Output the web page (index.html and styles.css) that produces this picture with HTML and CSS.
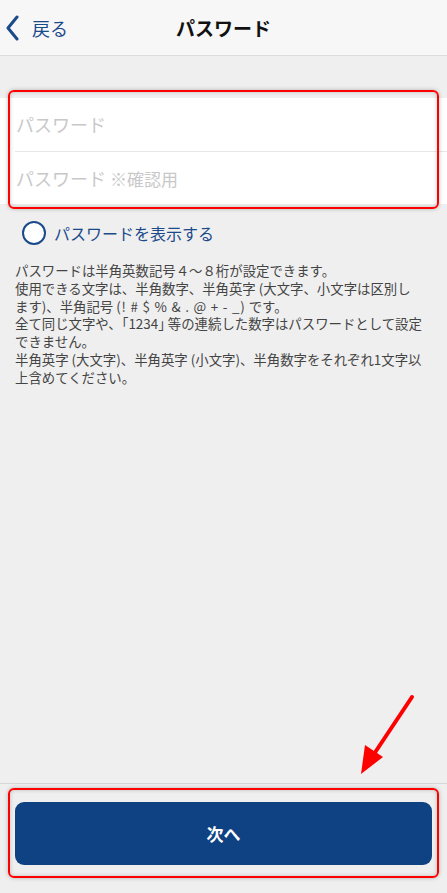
FILE: index.html
```html
<!DOCTYPE html>
<html lang="ja">
  <head>
    <meta charset="UTF-8">
    <title>パスワード</title>
    <meta name="viewport" content="width=device-width, initial-scale=1">
    <link rel="stylesheet" href="styles.css">
  </head>
  <body>
    <div id="header">
      <a class="back">
        <svg width="16" height="26" viewBox="0 0 16 26"><path d="M12 2 L3 13 L12 24" fill="none" stroke="#1b4a8a" stroke-width="3" stroke-linecap="round" stroke-linejoin="round"/></svg>
        <span>戻る</span>
      </a>
      <div class="title">パスワード</div>
    </div>

    <div id="main">
      <div class="card">
        <div class="field">パスワード</div>
        <div class="field">パスワード <span class="small">※確認用</span></div>
      </div>
      <div class="mark card-mark"></div>

      <label class="show">
        <span class="radio"></span>
        <span>パスワードを表示する</span>
      </label>

      <p class="note">
        パスワードは半角英数記号４～８桁が設定できます。<br>
        使用できる文字は、半角数字、半角英字 (大文字、小文字は区別し<br>
        ます)、半角記号 <span class="symbols">(! # $ % &amp; . @ + - _)</span> です。<br>
        全て同じ文字や、｢1234｣ 等の連続した数字はパスワードとして設定<br>
        できません。<br>
        半角英字 (大文字)、半角英字 (小文字)、半角数字をそれぞれ1文字以<br>
        上含めてください。
      </p>
    </div>

    <div id="footer">
      <button class="next">次へ</button>
      <div class="mark button-mark"></div>
    </div>

    <!-- annotation arrow -->
    <svg class="arrow" width="80" height="100" viewBox="0 0 80 100">
      <line x1="62" y1="7" x2="24" y2="64" stroke="#ff0000" stroke-width="4" stroke-linecap="round"/>
      <polygon points="11,84 15,55 33,67" fill="#ff0000"/>
    </svg>
  </body>
</html>
```

FILE: styles.css
```css
html, body {
  margin: 0;
  padding: 0;
  height: 100%;
}

body {
  position: relative;
  display: flex;
  flex-direction: column;
  background: #efefef;
  font-family: "Noto Sans CJK JP", "Noto Sans", sans-serif;
  color: #333;
}

#header {
  position: relative;
  height: 55px;
  background: #f7f7f7;
  border-bottom: 1px solid #dcdcdc;
  display: flex;
  align-items: center;
  justify-content: center;
  flex-shrink: 0;
}

.back {
  position: absolute;
  left: 5px;
  top: 15px;
  display: flex;
  align-items: center;
  gap: 11px;
  color: #1b4a8a;
  font-size: 18px;
}

.title {
  font-size: 19px;
  font-weight: bold;
  color: #111;
}

#main {
  position: relative;
  flex: 1;
  padding-top: 42px;
}

.card {
  background: #fff;
  padding-left: 15px;
}

.field {
  height: 53px;
  line-height: 53px;
  font-size: 18px;
  color: #c8c8c8;
  padding-left: 1px;
}

.field + .field {
  border-top: 1px solid #e6e6e6;
  height: 52px;
  line-height: 52px;
}

.small {
  font-size: 17px;
}

.mark {
  position: absolute;
  border: 2px solid #ff0000;
  border-radius: 6px;
  box-shadow: 0 0 4px rgba(0, 0, 0, 0.25), inset 0 0 4px rgba(0, 0, 0, 0.2);
}

.card-mark {
  left: 8px;
  right: 8px;
  top: 34px;
  height: 115px;
}

.show {
  display: flex;
  align-items: center;
  gap: 8px;
  padding: 17px 0 0 22px;
  color: #1b4a8a;
  font-size: 16px;
}

.radio {
  width: 20px;
  height: 20px;
  border: 2px solid #1b4a8a;
  border-radius: 50%;
  background: #fff;
}

.note {
  margin: 17px 0 0;
  padding: 0 15px;
  font-size: 13.4px;
  line-height: 17.8px;
  color: #444;
  white-space: nowrap;
}

.symbols {
  letter-spacing: 0.8px;
}

#footer {
  position: relative;
  flex-shrink: 0;
  height: 110px;
  border-top: 1px solid #d6d6d6;
  padding: 18px 15px 0;
  box-sizing: border-box;
}

.next {
  display: block;
  width: 100%;
  height: 63px;
  border: none;
  border-radius: 9px;
  background: #0f4282;
  color: #fff;
  font-family: inherit;
  font-size: 17px;
  font-weight: bold;
}

.button-mark {
  left: 8px;
  right: 8px;
  top: 4px;
  height: 86px;
}

.arrow {
  position: absolute;
  left: 350px;
  top: 690px;
}
```
